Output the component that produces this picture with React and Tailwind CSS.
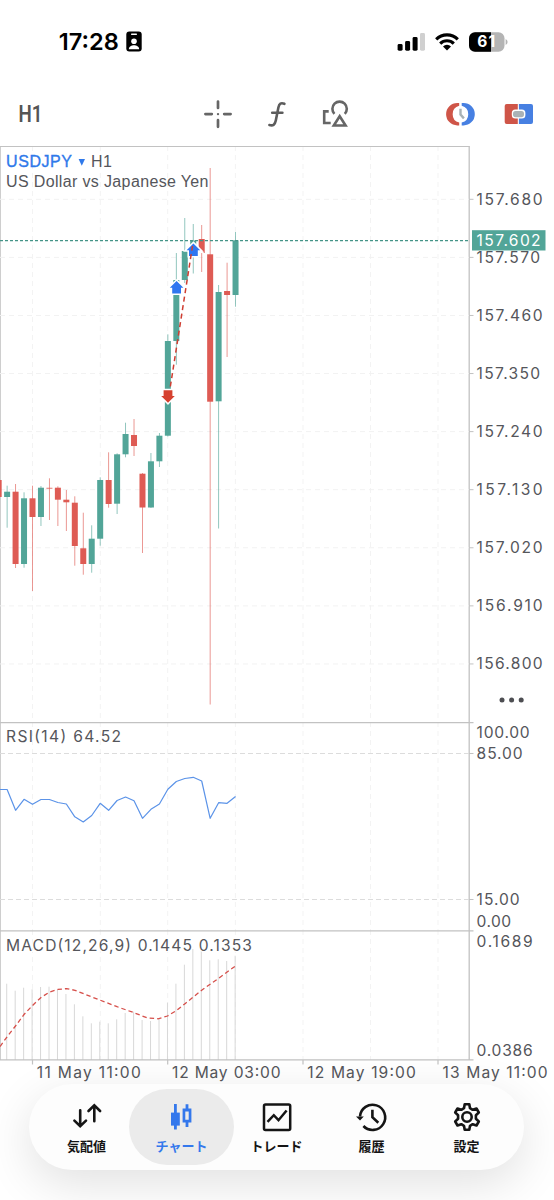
import React from "react";

const GREEN = "#52a598";
const RED = "#de5b54";
const AXIS = "#c2c2c2";
const LABEL = "#55565b";
const LATIN = 'Inter, "Noto Sans", sans-serif';

const STEP = 8.46;
const xAt = (i) => 32.5 + (i - 4) * STEP;

// [direction, body top, body bottom, wick top, wick bottom]
const CANDLES = [
  ["d", 480, 497, 480, 497],
  ["u", 491.7, 497, 485.7, 527.7],
  ["d", 491.7, 564, 484, 568],
  ["u", 498.3, 564, 492.3, 567.7],
  ["d", 498.3, 517, 485.7, 591],
  ["u", 487.7, 517, 486, 526],
  ["d", 487.8, 488.6, 478.3, 520],
  ["d", 487.7, 499.7, 486.3, 526],
  ["d", 499.7, 502.3, 490, 531],
  ["d", 502.7, 546, 496.3, 565.7],
  ["d", 548.3, 564, 512.7, 574.7],
  ["u", 538.7, 564, 525.3, 572.7],
  ["u", 480, 538.7, 477.3, 545.7],
  ["d", 480, 504, 452.3, 507.7],
  ["u", 454.3, 503.7, 453.3, 514],
  ["u", 434, 454.3, 422.7, 457.3],
  ["d", 435, 446, 419, 456],
  ["d", 473.7, 507.5, 473, 553],
  ["u", 461.3, 507.5, 453, 508],
  ["u", 435.7, 461.3, 433, 467],
  ["u", 341, 435.7, 334.3, 436.5],
  ["u", 280, 341, 253, 364.7],
  ["u", 251, 280, 218, 283],
  ["u", 240.5, 252, 224, 273.5],
  ["d", 239, 253, 225, 272],
  ["d", 254.3, 401.7, 168, 704.5],
  ["u", 292, 401.3, 285, 528.5],
  ["d", 291, 295, 262.7, 357],
  ["u", 240.3, 295, 232, 306.7],
];

const RSI = [
  789.5, 789.5, 810.3, 799.3, 804.3, 799.5, 799.5, 802.5, 804, 816.8, 822, 815.5, 803.3, 810.3, 800.5,
  797, 800.8, 818.3, 809.3, 804, 789.3, 781.5, 778.5, 777.3, 781, 818.3, 802.7, 803.3, 796.5,
];

const MACD = [
  983.7, 990.7, 987.7, 989.3, 987, 986.7, 989.7, 994, 1004.3, 1016.3, 1023.3, 1021.7, 1023.3, 1019.3,
  1013, 1011.7, 1020, 1021, 1019, 1002.7, 983.7, 964.7, 949, 948, 960.3, 959.3, 961, 955.7,
];

const SIGNAL =
  "0,1046.5 7.3,1036.5 15.5,1026 24,1014.5 32.5,1005.5 41,997.5 49.5,992 58,989.4 66.5,988.6 75,990.3 92,997 117,1006.7 134,1012.7 147,1017.8 158,1018.8 167.5,1016 176.5,1010.5 185,1003.7 202,990 219,978 235.4,966";

const GRID_X = [32.5, 100.3, 167.7, 235.4, 303, 370.5, 438];
const PRICES = ["157.680", "157.570", "157.460", "157.350", "157.240", "157.130", "157.020", "156.910", "156.800"];

function AxisText({ x = 476.6, y, width, fill = LABEL, children }) {
  return (
    <text x={x} y={y + 5.5} textLength={width} fill={fill} fontSize="15.6" fontFamily={LATIN}>
      {children}
    </text>
  );
}

function Frame({ top, bottom }) {
  return (
    <g>
      {GRID_X.map((x) => (
        <line key={x} x1={x} x2={x} y1={top} y2={bottom} stroke="#f3f3f3" strokeDasharray="5 4" />
      ))}
      <line x1="0.3" x2="0.3" y1={top} y2={bottom} stroke={AXIS} />
      <line x1="469.2" x2="469.2" y1={top} y2={bottom} stroke={AXIS} strokeWidth="1.3" />
    </g>
  );
}

function Marker({ x, y, down = false }) {
  return (
    <path
      transform={`translate(${x} ${y})${down ? " scale(1 -1)" : ""}`}
      d="M0 -6.8 L6.8 0 H4.4 V5.8 H-4.4 V0 H-6.8 Z"
      fill={down ? "#d6412f" : "#2f76f0"}
      stroke="#fff"
      strokeWidth="3"
      paintOrder="stroke"
    />
  );
}

function PricePanel() {
  return (
    <section className="h-[576px] w-full shrink-0">
      <svg className="block" width="554" height="576" viewBox="0 146 554 576">
        <Frame top={146} bottom={722} />
        <line x1="0" x2="469.5" y1="146.4" y2="146.4" stroke={AXIS} strokeWidth="1.2" />
        {PRICES.map((p, i) => {
          const y = 199.3 + i * 58.08;
          return (
            <g key={p}>
              <line x1="0" x2="469" y1={y} y2={y} stroke="#f2f2f2" strokeDasharray="5 4" />
              <line x1="469" x2="473.5" y1={y} y2={y} stroke={AXIS} />
              <AxisText y={y} width={i === 1 || i === 3 ? 63.5 : 66}>{p}</AxisText>
            </g>
          );
        })}
        {CANDLES.map(([dir, top, bottom, high, low], i) => {
          const color = dir === "u" ? GREEN : RED;
          return (
            <g key={i} fill={color}>
              <rect x={xAt(i) - 0.45} y={high} width="0.9" height={low - high} opacity="0.7" />
              <rect x={xAt(i) - 3} y={top} width="6" height={bottom - top} />
            </g>
          );
        })}
        <line x1="0" x2="469" y1="240.6" y2="240.6" stroke="#439487" strokeWidth="1.4" strokeDasharray="3 2" />
        <Marker x={176.6} y={287.8} />
        <path d="M193 242 L204.5 253.2 L193 252.5 Z" fill="#fff" />
        <Marker x={193.4} y={250.2} />
        <path d="M169 395 L192.5 246" stroke="#cf3d31" strokeWidth="1.5" strokeDasharray="5 3.6" fill="none" />
        <Marker x={168} y={396} down />
        <rect x="472" y="230.2" width="73.5" height="20.3" fill={GREEN} />
        <AxisText y={240.7} width={64} fill="#fff">157.602</AxisText>
        <g fill="#4d4e52">
          <circle cx="502" cy="700" r="2.5" />
          <circle cx="511.6" cy="700" r="2.5" />
          <circle cx="521.2" cy="700" r="2.5" />
        </g>
        <g fontFamily='"Liberation Sans", Arial, sans-serif' fontSize="16" fill={LABEL}>
          <text x="6" y="166.5" textLength="66" fill="#2f79ea" stroke="#2f79ea" strokeWidth="0.35">USDJPY</text>
          <path d="M78.6 158.9 H85 L81.8 165.8 Z" fill="#2f79ea" />
          <text x="91" y="166.5" textLength="21">H1</text>
          <text x="6" y="187" textLength="202.5">US Dollar vs Japanese Yen</text>
        </g>
      </svg>
    </section>
  );
}

function RsiPanel() {
  const points = RSI.map((y, i) => `${i === 0 ? 0 : xAt(i)},${y}`).join(" ");
  return (
    <section className="h-[208px] w-full shrink-0">
      <svg className="block" width="554" height="208" viewBox="0 722 554 208">
        <Frame top={722} bottom={930} />
        <line x1="0" x2="473.5" y1="722.6" y2="722.6" stroke={AXIS} strokeWidth="1.3" />
        {[753.5, 899.5].map((y) => (
          <g key={y}>
            <line x1="0" x2="469" y1={y} y2={y} stroke="#dcdcdc" strokeDasharray="5 3" />
            <line x1="469" x2="473.5" y1={y} y2={y} stroke={AXIS} />
          </g>
        ))}
        <AxisText x={6} y={736.9} width={115}>RSI(14) 64.52</AxisText>
        <AxisText y={732.6} width={53}>100.00</AxisText>
        <AxisText y={753.9} width={46}>85.00</AxisText>
        <AxisText y={899.6} width={43}>15.00</AxisText>
        <AxisText y={921} width={34.5}>0.00</AxisText>
        <polyline points={points} fill="none" stroke="#5b93e8" strokeWidth="1.2" strokeLinejoin="round" />
      </svg>
    </section>
  );
}

function MacdPanel() {
  return (
    <section className="h-[154px] w-full shrink-0">
      <svg className="block" width="554" height="154" viewBox="0 930 554 154">
        <Frame top={930} bottom={1060} />
        <line x1="0" x2="473.5" y1="930.8" y2="930.8" stroke={AXIS} strokeWidth="1.3" />
        {MACD.map((y, i) => (
          <line key={i} x1={xAt(i + 1) - 0.4} x2={xAt(i + 1) - 0.4} y1={y} y2="1060" stroke="#d8d8d8" strokeWidth="1" />
        ))}
        <line x1="0" x2="473.5" y1="1059.9" y2="1059.9" stroke={AXIS} strokeWidth="1.3" />
        <polyline points={SIGNAL} fill="none" stroke="#d64f4a" strokeWidth="1.3" strokeDasharray="4.5 3" />
        <text
          x="6" y="950.5" textLength="246" fill={LABEL} fontSize="15.6" fontFamily={LATIN}
          stroke="#fff" strokeWidth="2" paintOrder="stroke"
        >
          MACD(12,26,9) 0.1445 0.1353
        </text>
        <AxisText y={941} width={56}>0.1689</AxisText>
        <AxisText y={1050.8} width={56}>0.0386</AxisText>
        {[32.5, 167.7, 303, 438].map((x) => (
          <line key={x} x1={x} x2={x} y1="1060" y2="1064.5" stroke={AXIS} strokeWidth="1.2" />
        ))}
        <AxisText x={36.8} y={1072.9} width={104}>11 May 11:00</AxisText>
        <AxisText x={172} y={1072.9} width={108.5}>12 May 03:00</AxisText>
        <AxisText x={307.3} y={1072.9} width={108.5}>12 May 19:00</AxisText>
        <AxisText x={442.6} y={1072.9} width={105}>13 May 11:00</AxisText>
      </svg>
    </section>
  );
}

function StatusBar() {
  return (
    <header className="flex h-[82px] shrink-0 items-center justify-between pl-[54px] pr-[46px] pt-px">
      <div className="flex items-center gap-[3px]">
        <svg width="69" height="34" viewBox="-4 -5 69 34">
          <text x="0.8" y="20.4" textLength="60" lengthAdjust="spacingAndGlyphs" fontSize="23.4" fontWeight="600" fontFamily={LATIN}>17:28</text>
        </svg>
        <svg width="16" height="21" viewBox="0 0 16 21">
          <rect x="0.3" y="0.5" width="15.4" height="20" rx="3" />
          <rect x="5" y="2.6" width="6" height="1.3" rx="0.6" fill="#fff" />
          <circle cx="8" cy="10.2" r="2.8" fill="#fff" />
          <path d="M2.8 18.2 C3 15.2 5.5 14.2 8 14.2 S13 15.2 13.2 18.2 Z" fill="#fff" />
        </svg>
      </div>
      <div className="flex items-center">
        <svg width="29" height="20" viewBox="0 0 29 20" className="mr-[9px]">
          <rect x="0.6" y="12" width="5" height="6.7" rx="1.4" />
          <rect x="8.1" y="9" width="5" height="9.7" rx="1.4" />
          <rect x="15.6" y="5" width="5" height="13.7" rx="1.4" />
          <rect x="23" y="1" width="5" height="17.7" rx="1.4" fill="#d0d0d0" />
        </svg>
        <svg width="24" height="18" viewBox="0 0 24 18" className="mr-[10px]">
          <g fill="none" stroke="#000" strokeWidth="3.1">
            <path d="M1.2 6.4 A15.2 15.2 0 0 1 22.8 6.4" />
            <path d="M5.2 10.6 A9.6 9.6 0 0 1 18.8 10.6" />
          </g>
          <path d="M12 17.5 L8 13.5 A5.6 5.6 0 0 1 16 13.5 Z" />
        </svg>
        <svg width="39" height="20" viewBox="0 0 39 20">
          <clipPath id="battery"><rect x="0" y="0.3" width="35.5" height="19.4" rx="6" /></clipPath>
          <g clipPath="url(#battery)">
            <rect width="36" height="20" fill="#b4b4b4" />
            <rect width="22" height="20" fill="#000" />
          </g>
          <path d="M36.6 7 Q38.6 8 38.6 10 Q38.6 12 36.6 13 Z" fill="#b4b4b4" />
          <text x="8.3" y="15.4" textLength="18" fill="#fff" fontSize="15.5" fontWeight="700" fontFamily={LATIN}>61</text>
        </svg>
      </div>
    </header>
  );
}

function Toolbar() {
  return (
    <div className="flex h-16 shrink-0 items-center pl-[14px] pr-5">
      <svg width="34" height="34" viewBox="-4 -5 34 34">
        <text x="0.5" y="20" textLength="24" lengthAdjust="spacingAndGlyphs" fontFamily="Roboto, sans-serif" fontWeight="600" fontSize="23.8" fill="#555">H1</text>
      </svg>
      <svg width="30" height="30" viewBox="203 99 30 30" className="ml-[155px]">
        <g stroke="#666" strokeWidth="2.7" strokeLinecap="round">
          <path d="M218 101.5 V108 M218 120.2 V126.8 M205.4 114.1 H211.8 M224.2 114.1 H230.6" />
          <path d="M218 114.1 H218.01" strokeWidth="2.4" />
        </g>
      </svg>
      <svg width="24" height="28" viewBox="265 100 24 28" className="ml-8">
        <path d="M284.4 103.8 C281 102.4 279.2 103.6 278.4 107.4 L275.8 120.6 C275 124.8 272.8 126.2 269.4 125 M272.2 112.8 H282.4" fill="none" stroke="#5c5c5c" strokeWidth="2.6" strokeLinecap="round" />
      </svg>
      <svg width="28" height="28" viewBox="322 100 28 28" className="ml-[33px]">
        <g fill="none" stroke="#666" strokeWidth="2.6">
          <path d="M328.7 111.4 H324.2 V123 H330.7" />
          <path d="M334.4 113.8 A7.2 7.2 0 1 1 344.8 113.8" />
          <path d="M339.7 116.2 L345.6 125.5 H333.8 Z" />
        </g>
      </svg>
      <div className="ml-auto flex items-center gap-[28px]">
        <svg width="30" height="26" viewBox="446.5 101 30 26">
          <path d="M459.7 103 H457.8 A11 11 0 0 0 457.8 125.4 H459.7 V122.5 A8.6 8.6 0 0 1 459.7 105.8 Z" fill="#cf5548" />
          <path d="M462.2 103 H464.1 A11 11 0 0 1 464.1 125.4 H462.2 V122.5 A8.6 8.6 0 0 0 462.2 105.8 Z" fill="#4780e2" />
          <path d="M461 108.8 V114.6 L464.4 118.4" fill="none" stroke="#a9b2b5" strokeWidth="2.4" />
        </svg>
        <svg width="30" height="22" viewBox="504 103 30 22">
          <path d="M506.7 104 H517.8 V124 H506.7 Q504.7 124 504.7 122 V106 Q504.7 104 506.7 104 Z" fill="#cf5548" />
          <path d="M518.9 104 H531 Q533 104 533 106 V122 Q533 124 531 124 H518.9 Z" fill="#4780e2" />
          <rect x="511.8" y="109.6" width="13.6" height="9" rx="3.5" fill="#fff" />
          <rect x="513" y="111" width="11" height="6.2" rx="2.6" fill="#aab2b6" />
        </svg>
      </div>
    </div>
  );
}

function QuotesIcon() {
  return (
    <g fill="none" stroke="currentColor" strokeWidth="2.6" strokeLinecap="round">
      <path d="M9.2 9.2 V25 M3.4 19.6 L9.2 25.3 L15 19.6" />
      <path d="M23.3 20.2 V4.6 M17.5 10 L23.3 4.3 L29.1 10" />
    </g>
  );
}

function ChartIcon() {
  return (
    <g fill="currentColor">
      <rect x="5" y="11.6" width="8.8" height="13" />
      <rect x="8" y="3" width="2.8" height="25.5" />
      <path fillRule="evenodd" d="M16.6 7.6 H19.6 V3.2 H22.4 V7.6 H25.4 V21.6 H22.4 V26 H19.6 V21.6 H16.6 Z M19.3 10.4 V18.8 H22.7 V10.4 Z" />
    </g>
  );
}

function TradeIcon() {
  return (
    <g fill="none" stroke="currentColor" strokeWidth="2.5">
      <rect x="3" y="3.4" width="26.2" height="25.6" rx="1.5" />
      <path d="M6.5 20.8 L12.8 14.2 L17.5 19.2 L25.6 9.5" />
    </g>
  );
}

function HistoryIcon() {
  return (
    <g fill="none" stroke="currentColor" strokeWidth="2.6">
      <path d="M4 15.5 A12.6 12.6 0 1 1 7.4 25" />
      <path d="M16.4 8.8 V16.3 L22.3 21.8" />
      <path d="M0 15.6 H7.8 L4 19.4 Z" fill="currentColor" stroke="none" />
    </g>
  );
}

function SettingsIcon() {
  return (
    <g fill="none" stroke="currentColor" strokeWidth="2.6" strokeLinejoin="round">
      <circle cx="16" cy="16" r="4.7" />
      <path d="M13.7 3.3 H18.3 L19 7.2 L21.7 8.8 L25.5 7.5 L27.8 11.5 L24.9 14.2 V17.8 L27.8 20.5 L25.5 24.5 L21.7 23.2 L19 24.8 L18.3 28.7 H13.7 L13 24.8 L10.3 23.2 L6.5 24.5 L4.2 20.5 L7.1 17.8 V14.2 L4.2 11.5 L6.5 7.5 L10.3 8.8 L13 7.2 Z" />
    </g>
  );
}

const TABS = [
  { label: "気配値", Icon: QuotesIcon },
  { label: "チャート", Icon: ChartIcon, active: true },
  { label: "トレード", Icon: TradeIcon },
  { label: "履歴", Icon: HistoryIcon },
  { label: "設定", Icon: SettingsIcon },
];

function TabBar() {
  return (
    <div className="flex h-[116px] shrink-0 items-start pl-[29px] pr-[30px]">
      <nav className="grid h-[86px] w-full grid-cols-5 rounded-[43px] bg-[#fdfdfd] px-[10px] py-[5px] shadow-[0_14px_48px_rgba(0,0,0,0.12)]">
        {TABS.map(({ label, Icon, active }) => (
          <button
            key={label}
            className={
              active
                ? "-mx-[5px] flex flex-col items-center rounded-[38px] bg-[#ebebeb] pt-[11.5px] text-[#3478ec]"
                : "-mx-[5px] flex flex-col items-center pt-[11.5px] text-[#151515]"
            }
          >
            <svg width="32" height="32" viewBox="0 0 32 32"><Icon /></svg>
            <span className="mt-[3.5px] whitespace-nowrap font-['Noto_Sans_CJK_JP',sans-serif] text-[13px] font-bold leading-5">
              {label}
            </span>
          </button>
        ))}
      </nav>
    </div>
  );
}

export default function App() {
  return (
    <main className="flex h-[1200px] w-[554px] flex-col overflow-hidden bg-white">
      <StatusBar />
      <Toolbar />
      <PricePanel />
      <RsiPanel />
      <MacdPanel />
      <TabBar />
    </main>
  );
}
